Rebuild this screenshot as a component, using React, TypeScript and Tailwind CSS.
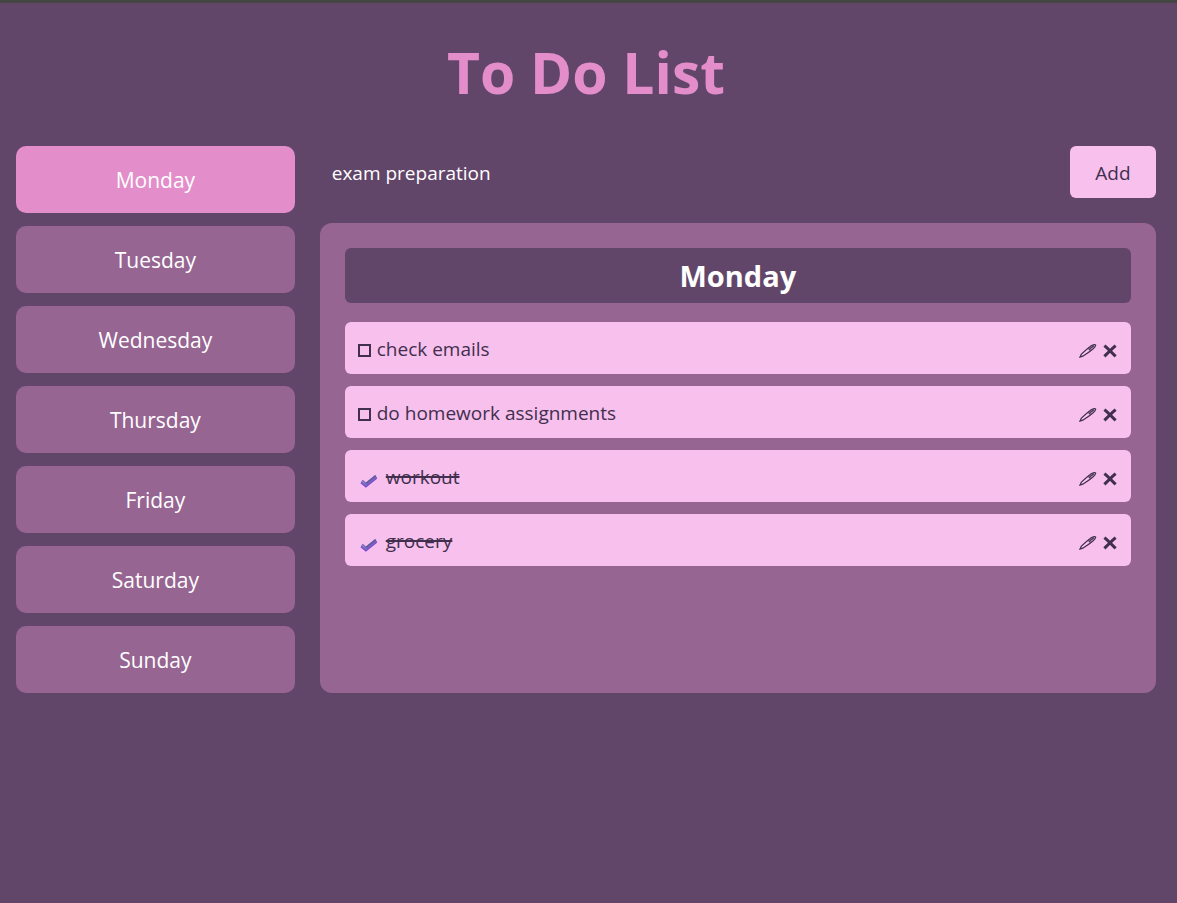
import { useState } from "react";

const days = ["Monday", "Tuesday", "Wednesday", "Thursday", "Friday", "Saturday", "Sunday"];

type Task = { text: string; done: boolean };

const initialTasks: Record<string, Task[]> = {
  Monday: [
    { text: "check emails", done: false },
    { text: "do homework assignments", done: false },
    { text: "workout", done: true },
    { text: "grocery", done: true },
  ],
};

function CheckMark() {
  return (
    <svg
      viewBox="0 0 18 14"
      className="pointer-events-none col-start-1 row-start-1 h-[14px] w-[18px]"
      fill="none"
      aria-hidden="true"
    >
      <path d="M1.6 7.8 5.9 11.4 16.2 3" stroke="#8048dc" strokeWidth="3.6" />
      <path d="M1.8 7 5.9 10.4 16 2.2" stroke="#7668b8" strokeWidth="3" />
      <path d="M6 9.4 15.6 1.6" stroke="#5f5594" strokeWidth="1.2" />
      <path d="M2 7.2 5.4 10" stroke="#9c88d8" strokeWidth="1" />
    </svg>
  );
}

function PenIcon() {
  return (
    <svg viewBox="0 0 18 15" className="h-[15px] w-[18px]" fill="none" stroke="currentColor" aria-hidden="true">
      <path d="M1 13 2.4 10.2 Q7 5.6 12.2 1.8 Q15.6 0 16.6 0.9 Q17 2.4 14.2 4.8 Q9 9.2 3.8 12.2Z" strokeWidth="1.2" />
      <path d="M9.4 4.2 11.4 6.4" strokeWidth="1.3" />
      <path d="M11 4.6 15 1.8" strokeWidth="1.4" />
    </svg>
  );
}

function CrossIcon() {
  return (
    <svg viewBox="0 0 14 14" className="size-[14px]" fill="none" stroke="currentColor" strokeWidth="3" aria-hidden="true">
      <path d="M1.4 1.6 Q5 4.6 12.6 12.4 M12.6 1.6 Q8 5.6 1.4 12.4" />
    </svg>
  );
}

export default function App() {
  const [day, setDay] = useState("Monday");
  const [draft, setDraft] = useState("exam preparation");
  const [tasks, setTasks] = useState(initialTasks);
  const list = tasks[day] ?? [];
  const update = (next: Task[]) => setTasks({ ...tasks, [day]: next });

  return (
    <div className="min-h-screen border-t-3 border-[#444643] bg-[#62466a] pr-[21px] pb-6 pl-4 font-['Open_Sans','Noto_Sans',sans-serif] text-white">
      <h1 className="pt-[26px] pb-[30px] text-center text-[57px] leading-[87px] font-bold text-[#e38dca]">To Do List</h1>
      <main className="grid grid-cols-[minmax(0,1fr)_minmax(0,3fr)] gap-[25px]">
        <nav className="flex flex-col gap-[13px]" aria-label="Days">
          {days.map((d) => (
            <button
              key={d}
              type="button"
              onClick={() => setDay(d)}
              className={
                d === day
                  ? "h-[67px] rounded-[10px] bg-[#e38dca] pt-[2px] text-[21px]"
                  : "h-[67px] rounded-[10px] bg-[#966592] pt-[2px] text-[21px]"
              }
            >
              {d}
            </button>
          ))}
        </nav>
        <div className="flex flex-col gap-[25px]">
          <form
            className="flex gap-3"
            onSubmit={(e) => {
              e.preventDefault();
              if (draft.trim()) update([...list, { text: draft.trim(), done: false }]);
              setDraft("");
            }}
          >
            <input
              type="text"
              aria-label="New task"
              value={draft}
              onChange={(e) => setDraft(e.target.value)}
              className="h-[52px] min-w-0 flex-1 bg-transparent px-3 pt-[2px] text-[19px] outline-none"
            />
            <button type="submit" className="h-[52px] w-[86px] rounded-md bg-[#f7c0ed] pt-[2px] text-[19px] text-[#412f4d]">
              Add
            </button>
          </form>
          <section className="flex-1 rounded-xl bg-[#966592] p-[25px]">
            <h2 className="rounded-md bg-[#62466a] text-center text-[29px] leading-[55px] font-bold">{day}</h2>
            <ul className="mt-[19px] flex flex-col gap-3">
              {list.map((task, i) => (
                <li key={i} className="flex h-[52px] items-center rounded-md bg-[#f7c0ed] px-3 pt-[2px] text-[19px] text-[#412f4d]">
                  <label className="flex flex-1 items-center">
                    {task.done ? (
                      <span className="mt-2 mr-2 ml-[3px] grid">
                        <input
                          type="checkbox"
                          checked
                          onChange={() => update(list.map((t, j) => (j === i ? { ...t, done: false } : t)))}
                          className="col-start-1 row-start-1 h-[14px] w-[18px] appearance-none"
                        />
                        <CheckMark />
                      </span>
                    ) : (
                      <input
                        type="checkbox"
                        checked={false}
                        onChange={() => update(list.map((t, j) => (j === i ? { ...t, done: true } : t)))}
                        className="mt-[2px] mr-[6px] ml-px size-[13px] appearance-none border-2 border-current"
                      />
                    )}
                    <span className={task.done ? "line-through decoration-2" : ""}>{task.text}</span>
                  </label>
                  <div className="mt-1 flex items-center gap-[6px] pr-[2px]">
                    <button
                      type="button"
                      aria-label={"Edit " + task.text}
                      onClick={() => {
                        setDraft(task.text);
                        update(list.filter((_, j) => j !== i));
                      }}
                    >
                      <PenIcon />
                    </button>
                    <button type="button" aria-label={"Delete " + task.text} onClick={() => update(list.filter((_, j) => j !== i))}>
                      <CrossIcon />
                    </button>
                  </div>
                </li>
              ))}
            </ul>
          </section>
        </div>
      </main>
    </div>
  );
}
